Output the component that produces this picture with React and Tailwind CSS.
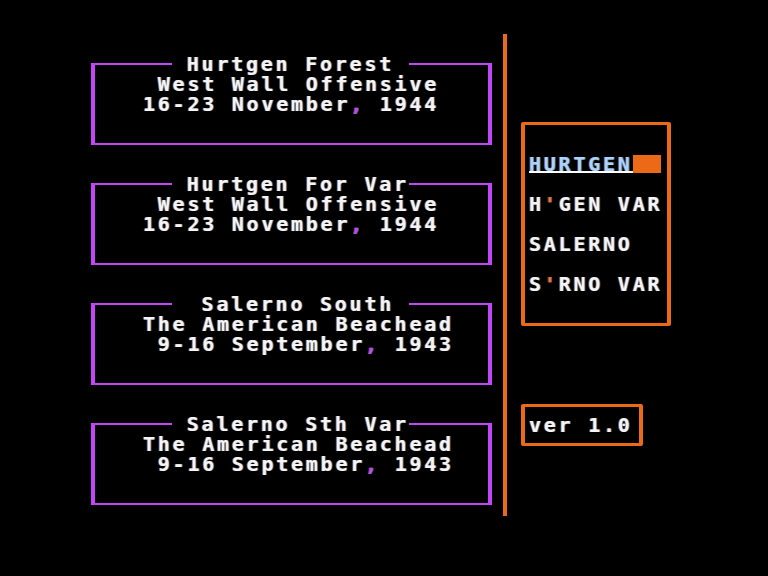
import React from "react";

function Txt({ s }) {
  const parts = s.split(",");
  return (
    <>
      {parts.map((p, i) => (
        <React.Fragment key={i}>
          {p}
          {i < parts.length - 1 && <span className="text-[#c146f5]">,</span>}
        </React.Fragment>
      ))}
    </>
  );
}

function Box({ title, line2, line3 }) {
  return (
    <div className="flex flex-col w-[401px]">
      <div className="flex h-[20px]">
        <div className="self-end h-[11px] w-[81px] border-t-2 border-l-4 border-[#c146f5]" />
        <div className="w-[237px] whitespace-pre">{title}</div>
        <div className="self-end h-[11px] flex-1 border-t-2 border-r-4 border-[#c146f5]" />
      </div>
      <div className="h-[71px] border-x-4 border-b-2 border-[#c146f5] pl-[48px] whitespace-pre">
        <div><Txt s={line2} /></div>
        <div><Txt s={line3} /></div>
      </div>
    </div>
  );
}

const Apos = () => <span className="text-[#f07020]">'</span>;

export default function App() {
  return (
    <div className="w-[768px] h-[576px] bg-black overflow-hidden text-[#f4f4f4] font-['DejaVu_Sans_Mono',monospace] font-bold text-[20px] leading-[20px] tracking-[2.76px] [text-shadow:1px_0_0_rgba(90,170,255,0.5),-1px_0_0_rgba(255,140,60,0.45)]">
      <div className="flex pl-[91px]">
        <div className="flex flex-col gap-[29px] pt-[54px]">
          <Box title=" Hurtgen Forest" line2=" West Wall Offensive" line3="16-23 November, 1944" />
          <Box title=" Hurtgen For Var" line2=" West Wall Offensive" line3="16-23 November, 1944" />
          <Box title="  Salerno South" line2="The American Beachead" line3=" 9-16 September, 1943" />
          <Box title=" Salerno Sth Var" line2="The American Beachead" line3=" 9-16 September, 1943" />
        </div>
        <div className="ml-[11px] mt-[34px] w-[4px] h-[482px] bg-[#ec6a17]" />
        <div className="ml-[14px] pt-[122px] flex flex-col">
          <div className="w-[150px] h-[204px] border-x-4 border-y-[3px] border-[#ec6a17] rounded-[2px] pt-[29px] pl-[4px] flex flex-col gap-[20px] whitespace-pre">
            <div className="flex h-[20px]">
              <span className="text-[#a8d4ff] border-b-2 border-white h-[19px]">HURTGEN</span>
              <span className="w-[28px] h-[18px] mt-[1px] bg-[#ec6a17]" />
            </div>
            <div>H<Apos />GEN VAR</div>
            <div>SALERNO</div>
            <div>S<Apos />RNO VAR</div>
          </div>
          <div className="mt-[78px] w-[122px] h-[42px] border-x-4 border-y-[3px] border-[#ec6a17] rounded-[2px] pt-[8px] pl-[4px] whitespace-pre">
            ver 1.0
          </div>
        </div>
      </div>
    </div>
  );
}
